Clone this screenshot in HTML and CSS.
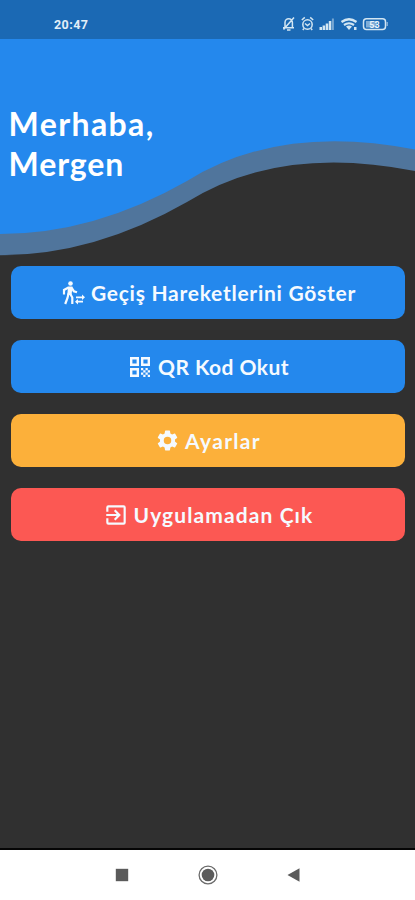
FILE: index.html
```html
<!DOCTYPE html>
<html lang="tr">
<head>
<meta charset="utf-8">
<title>Mergen</title>
<link rel="stylesheet" href="styles.css">
</head>
<body>
<div class="status">
  <span class="time">20:47</span>
  <svg class="indicators" width="110" height="18" viewBox="0 0 110 18" fill="none" stroke="#d3e6f2" stroke-width="1.500">
    <path d="M4 12.5V7.5a3.7 3.7 0 0 1 7.4 0v5M2 12.8h11M6 15h3.5M13 2.500 2.500 14.500"/>
    <circle cx="26.500" cy="9.500" r="4.700"/><path d="M24 8.500l2.500 2 2.500-2M20.800 5l3-2.600M32.200 5l-3-2.600M23 13.500l-1.200 1.500M30 13.500l1.200 1.500"/>
    <g stroke="none" fill="#d3e6f2"><path d="M38.500 12h2.500v3h-2.500zM41.600 10.500h2.500V15h-2.500zM44.700 8.500h2.500V15h-2.500zM47.800 6h2.500v9h-2.500z"/><path opacity=".5" d="M50.900 3.500h2V15h-2z"/></g>
    <path stroke-width="2.200" d="M60.500 7q7.500-5.500 15 0M63 10q5-3.500 10 0"/><path fill="#d3e6f2" stroke="none" d="M65 11.500q3-2 6 0l-3 3.500zM73 12h2.500v3H73z"/>
    <rect x="82.500" y="3.700" width="22" height="10.800" rx="3"/><path fill="#d3e6f2" stroke="none" d="M105.500 7h1.500v4h-1.500zM85 6h11v6.500H85z" opacity=".55"/>
    <text x="93.500" y="12.500" text-anchor="middle">53</text>
  </svg>
</div>
<header class="hero">
  <svg class="wave" width="415" height="217" viewBox="0 39 415 217">
    <path fill="#50759c" d="M0 39V255.300Q94 255.300 187 202Q280 144 415 171V39Z"/>
    <path fill="#2488ed" d="M0 39V234Q94 234 187 181Q280 123 415 149.500V39Z"/>
  </svg>
  <h1><span class="hello">Merhaba,</span><br><span class="name">Mergen</span></h1>
</header>
<main>
  <button class="b blue">
    <svg width="26" height="26" viewBox="0 0 26 26" fill="none" stroke="currentColor" stroke-width="2.200"><circle cx="10.500" cy="3.500" r="2.300" fill="currentColor" stroke="none"/><path fill="currentColor" stroke="none" d="M8 6.500h4.500l-1 8.500H7.300z"/><path d="M8.500 7.500 4 10v4.500M11.500 7.500l2.300 3.700 3.200 1M8.500 13.500 7.500 18l-2.300 6M10 13.500l2.300 4V24"/><path stroke-width="1.700" d="M16 17.300h7M16 21.700h7"/><path fill="currentColor" stroke="none" d="m22 14.500 3 2.800-3 2.700zM18 19l-3 2.700 3 2.800z"/></svg>
    <span class="t1">Geçiş Hareketlerini Göster</span>
  </button>
  <button class="b blue">
    <svg width="26" height="26" viewBox="0 0 26 26" fill="none" stroke="currentColor" stroke-width="2.400"><path d="M4.200 4.200h6.600v6.600H4.200zM15.200 4.200h6.600v6.600h-6.600zM4.200 15.200h6.600v6.600H4.200z"/><path fill="currentColor" stroke="none" d="M14 14h2.250v2.250H14zM18.500 14h2.250v2.250H18.500zM16.250 16.250h2.250v2.250h-2.250zM20.750 16.250H23v2.250h-2.250zM14 18.500h2.250v2.250H14zM18.500 18.500h2.250v2.250H18.500zM16.250 20.750h2.250V23h-2.250zM20.750 20.750H23V23h-2.250z"/></svg>
    <span class="t2">QR Kod Okut</span>
  </button>
  <button class="b amber">
    <svg width="25" height="25" viewBox="0 0 24 24" fill="currentColor"><path d="M19.140 12.940c.040-.3.060-.610.060-.940s-.020-.640-.070-.940l2.030-1.580a.49.49 0 0 0 .120-.610l-1.920-3.320a.49.49 0 0 0-.590-.220l-2.390.960a7.030 7.030 0 0 0-1.620-.940l-.360-2.540A.48.48 0 0 0 13.920 2.400h-3.840a.48.48 0 0 0-.470.410l-.360 2.540c-.590.240-1.130.570-1.620.940l-2.390-.960a.48.48 0 0 0-.590.220L2.740 8.870a.48.48 0 0 0 .120.610l2.030 1.580c-.050.300-.090.630-.090.940s.020.640.070.940l-2.030 1.580a.49.49 0 0 0-.120.610l1.920 3.320c.120.220.370.290.590.220l2.390-.960c.500.380 1.030.700 1.620.940l.360 2.540c.050.240.240.410.480.410h3.840c.240 0 .440-.170.470-.410l.360-2.540c.590-.240 1.130-.560 1.620-.940l2.390.960c.220.080.470 0 .590-.220l1.920-3.320a.48.48 0 0 0-.120-.610zM12 15.600A3.600 3.600 0 1 1 12 8.400a3.600 3.600 0 0 1 0 7.200z"/></svg>
    <span class="t3">Ayarlar</span>
  </button>
  <button class="b red">
    <svg width="26" height="26" viewBox="0 0 24 24" fill="currentColor"><path d="M10.090 15.590 11.500 17l5-5-5-5-1.410 1.410L12.670 11H3v2h9.670zM19 3H5a2 2 0 0 0-2 2v4h2V5h14v14H5v-4H3v4a2 2 0 0 0 2 2h14a2 2 0 0 0 2-2V5a2 2 0 0 0-2-2z"/></svg>
    <span class="t4">Uygulamadan Çık</span>
  </button>
</main>
<nav>
  <svg width="24" height="24" viewBox="0 0 24 24"><path fill="#5b5b5b" d="M5.800 5.800h12.400v12.400H5.800z"/></svg>
  <svg width="24" height="24" viewBox="0 0 24 24"><circle cx="12" cy="12" r="8.900" fill="none" stroke="#6b6b6b" stroke-width="1.300"/><circle cx="12" cy="12" r="6.300" fill="#5b5b5b"/></svg>
  <svg width="24" height="24" viewBox="0 0 24 24"><path fill="#5b5b5b" d="M5.500 12 17.500 5.200v13.600z"/></svg>
</nav>
</body>
</html>
```
FILE: styles.css
```css
* { box-sizing: border-box; }
body {
  margin: 0;
  height: 900px;
  display: flex;
  flex-direction: column;
  background: #303030;
  color: #fff;
  font-family: Lato, "Liberation Sans", sans-serif;
  overflow: hidden;
}
.status {
  height: 39px;
  flex: none;
  background: #1b69b4;
  display: flex;
  justify-content: space-between;
  padding: 15px 24px 0 54px;
}
.time {
  font: 700 12.5px/19px Roboto, sans-serif;
  letter-spacing: .45px;
  color: #e3eff8;
}
.indicators text {
  font: 700 9px Roboto, sans-serif;
  fill: #e8f2fa;
  stroke: none;
}
.hero {
  display: grid;
  height: 217px;
  flex: none;
}
.wave, h1 { grid-area: 1 / 1; }
h1 {
  margin: 0;
  padding: 65px 0 0 8.5px;
  font-size: 32px;
  line-height: 40px;
  font-weight: 700;
}
.hello { letter-spacing: 1.4px; }
.name { letter-spacing: .9px; }
main {
  flex: 1;
  padding: 10px 10px 0 11px;
  display: flex;
  flex-direction: column;
  gap: 21px;
}
.b {
  height: 53px;
  border: 0;
  border-radius: 10px;
  padding: 0;
  display: flex;
  align-items: center;
  justify-content: center;
  gap: 5px;
  color: #f5faff;
  font: 700 21px/30px Lato, "Liberation Sans", sans-serif;
  white-space: nowrap;
}
.blue { background: #2488ed; }
.amber { background: #fcb03a; }
.red { background: #fc5853; }
.t1 { letter-spacing: .73px; }
.t2 { letter-spacing: .45px; }
.t3 { letter-spacing: 1.3px; }
.t4 { letter-spacing: 1.1px; }
nav {
  height: 52px;
  flex: none;
  border-top: 2px solid #050505;
  background: #fff;
  display: flex;
  justify-content: center;
  align-items: center;
  gap: 62px;
}
```
